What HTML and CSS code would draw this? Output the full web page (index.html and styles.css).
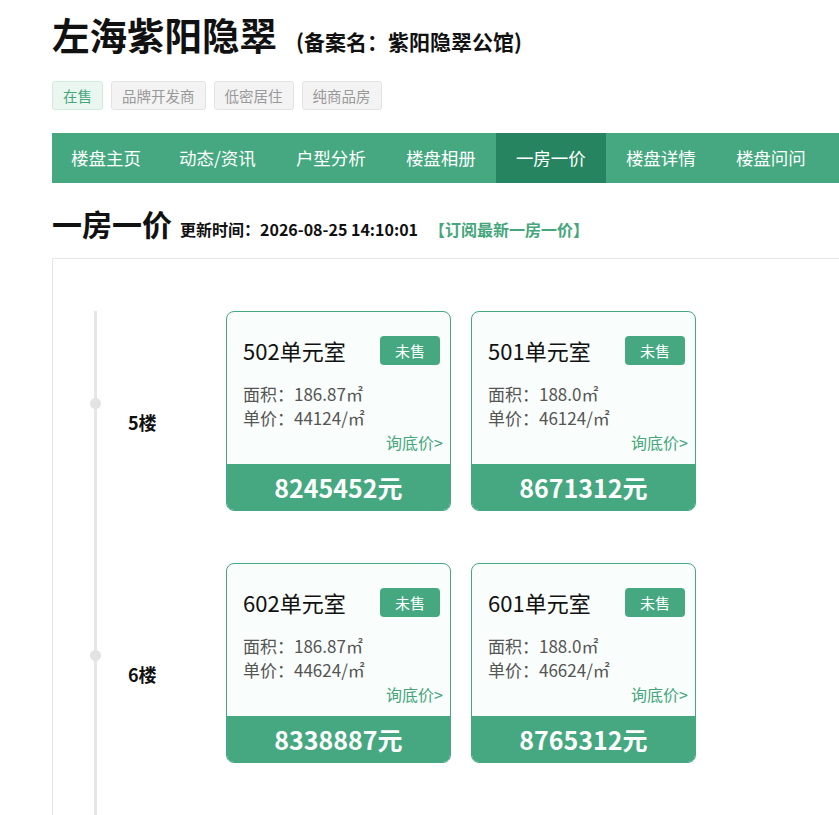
FILE: index.html
```html
<!DOCTYPE html>
<html lang="zh-CN">
<head>
    <meta charset="UTF-8">
    <meta name="viewport" content="width=device-width, initial-scale=1.0">
    <title>左海紫阳隐翠 - 一房一价</title>
    <link rel="stylesheet" href="styles.css">
</head>
<body>
<div class="page">
    <div class="title-row">
        <h1 class="title">左海紫阳隐翠</h1>
        <span class="record-name">(备案名：紫阳隐翠公馆)</span>
    </div>
    <div class="tags">
        <span class="tag tag-sale">在售</span>
        <span class="tag">品牌开发商</span>
        <span class="tag">低密居住</span>
        <span class="tag">纯商品房</span>
    </div>

    <ul class="nav">
        <li><a href="#">楼盘主页</a></li>
        <li><a href="#">动态/资讯</a></li>
        <li><a href="#">户型分析</a></li>
        <li><a href="#">楼盘相册</a></li>
        <li class="active"><a href="#">一房一价</a></li>
        <li><a href="#">楼盘详情</a></li>
        <li><a href="#">楼盘问问</a></li>
    </ul>

    <div class="section-head">
        <h2>一房一价</h2>
        <span class="update-time">更新时间：2026-08-25 14:10:01</span>
        <a class="subscribe" href="#">【订阅最新一房一价】</a>
    </div>

    <div class="panel">
        <div class="floors">
            <div class="floor">
                <div class="floor-name">5楼</div>
                <div class="room">
                    <div class="room-body">
                        <div class="room-top">
                            <span class="room-no">502单元室</span>
                            <span class="badge">未售</span>
                        </div>
                        <p class="info">面积：186.87㎡</p>
                        <p class="info">单价：44124/㎡</p>
                        <a class="ask" href="#">询底价&gt;</a>
                    </div>
                    <div class="total">8245452元</div>
                </div>
                <div class="room">
                    <div class="room-body">
                        <div class="room-top">
                            <span class="room-no">501单元室</span>
                            <span class="badge">未售</span>
                        </div>
                        <p class="info">面积：188.0㎡</p>
                        <p class="info">单价：46124/㎡</p>
                        <a class="ask" href="#">询底价&gt;</a>
                    </div>
                    <div class="total">8671312元</div>
                </div>
            </div>

            <div class="floor">
                <div class="floor-name">6楼</div>
                <div class="room">
                    <div class="room-body">
                        <div class="room-top">
                            <span class="room-no">602单元室</span>
                            <span class="badge">未售</span>
                        </div>
                        <p class="info">面积：186.87㎡</p>
                        <p class="info">单价：44624/㎡</p>
                        <a class="ask" href="#">询底价&gt;</a>
                    </div>
                    <div class="total">8338887元</div>
                </div>
                <div class="room">
                    <div class="room-body">
                        <div class="room-top">
                            <span class="room-no">601单元室</span>
                            <span class="badge">未售</span>
                        </div>
                        <p class="info">面积：188.0㎡</p>
                        <p class="info">单价：46624/㎡</p>
                        <a class="ask" href="#">询底价&gt;</a>
                    </div>
                    <div class="total">8765312元</div>
                </div>
            </div>
        </div>
    </div>
</div>
</body>
</html>
```

FILE: styles.css
```css
html, body {
    overflow: hidden;
}
body {
    margin: 0;
    background: #fff;
    color: #111;
    font-family: "Noto Sans CJK SC", "Noto Sans", sans-serif;
}
.page {
    width: 900px;
    padding: 10px 0 0 52px;
}

/* title */
.title-row {
    display: flex;
    align-items: baseline;
}
.title {
    margin: 0;
    font-size: 37.5px;
    line-height: 47px;
    font-weight: bold;
}
.record-name {
    margin-left: 19px;
    font-size: 21px;
    font-weight: bold;
}
.tags {
    display: flex;
    gap: 8px;
    margin-top: 24px;
}
.tag {
    height: 27px;
    line-height: 27px;
    padding: 0 10px;
    font-size: 14.5px;
    color: #999;
    background: #f3f3f3;
    border: 1px solid #e3e3e3;
    border-radius: 3px;
}
.tag-sale {
    color: #45a67c;
    background: #eaf6f0;
    border-color: #d2ebdf;
}

/* nav */
.nav {
    display: flex;
    list-style: none;
    margin: 23px 0 0;
    padding: 0;
    background: #45a880;
}
.nav li a {
    display: block;
    padding: 0 20px;
    line-height: 50px;
    font-size: 17.5px;
    color: #fff;
    text-decoration: none;
}
.nav li.active a {
    background: #268560;
}
.nav li:first-child a {
    padding: 0 18px 0 19px;
}

/* section */
.section-head {
    display: flex;
    align-items: baseline;
    margin-top: 20px;
    height: 40px;
}
.section-head h2 {
    margin: 0;
    font-size: 30px;
    line-height: 40px;
    font-weight: bold;
}
.update-time {
    margin-left: 8px;
    font-size: 16px;
    font-weight: bold;
}
.subscribe {
    margin-left: 11px;
    font-size: 16px;
    font-weight: bold;
    color: #45a67c;
    text-decoration: none;
}
.panel {
    margin-top: 15px;
    border: 1px solid #e6e6e6;
    padding-top: 52px;
}
.floors {
    position: relative;
}
.floors::before {
    content: "";
    position: absolute;
    left: 41px;
    top: 0;
    bottom: 0;
    width: 3px;
    background: #e6e6e6;
}
.floor {
    display: flex;
    gap: 20px;
    padding-bottom: 52px;
}
.floor-name {
    position: relative;
    width: 98px;
    margin-right: -20px;
    padding: 99px 0 0 75px;
    font-size: 18px;
    line-height: 24px;
    font-weight: bold;
}
.floor-name::before {
    content: "";
    position: absolute;
    left: 37px;
    top: 87px;
    width: 11px;
    height: 11px;
    border-radius: 50%;
    background: #e3e3e3;
}

/* room card */
.room {
    display: flex;
    flex-direction: column;
    width: 223px;
    height: 198px;
    border: 1px solid #45a880;
    border-radius: 8px;
    overflow: hidden;
    background: #f9fdfb;
}
.room-body {
    flex: 1;
    padding: 23px 10px 0 16px;
}
.room-top {
    display: flex;
    justify-content: space-between;
    align-items: center;
    height: 30px;
    margin-bottom: 17px;
}
.room-no {
    font-size: 22px;
    line-height: 30px;
    color: #111;
}
.badge {
    width: 60px;
    height: 29px;
    line-height: 29px;
    text-align: center;
    font-size: 15px;
    color: #fff;
    background: #45a880;
    border-radius: 4px;
}
.info {
    margin: 0;
    font-size: 17px;
    line-height: 24px;
    color: #555;
}
.ask {
    display: block;
    margin-right: -3px;
    text-align: right;
    font-size: 16px;
    line-height: 25px;
    color: #45a67c;
    text-decoration: none;
}
.total {
    height: 46px;
    line-height: 46px;
    text-align: center;
    font-size: 25px;
    font-weight: bold;
    color: #fff;
    background: #45a880;
}
```
